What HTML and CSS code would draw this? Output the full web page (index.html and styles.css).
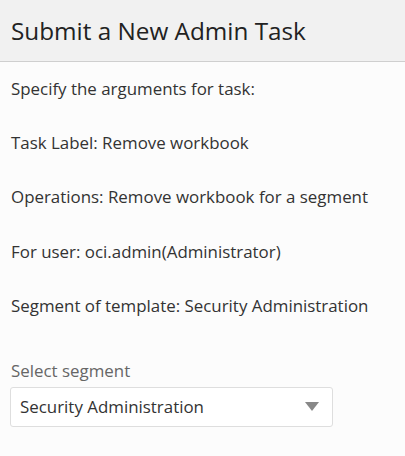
FILE: index.html
```html
<!DOCTYPE html>
<html>
<head>
<meta charset="utf-8">
<link rel="stylesheet" href="styles.css">
</head>
<body>
<div class="dialog">
  <div class="header"><h1 class="title">Submit a New Admin Task</h1></div>
  <div class="content">
    <p class="line">Specify the arguments for task:</p>
    <p class="line">Task Label: Remove workbook</p>
    <p class="line">Operations: Remove workbook for a segment</p>
    <p class="line">For user: oci.admin(Administrator)</p>
    <p class="line">Segment of template: Security Administration</p>
    <div class="field">
      <label class="field-label">Select segment</label>
      <div class="select">
        <span class="select-value">Security Administration</span>
        <span class="caret"></span>
      </div>
    </div>
  </div>
</div>
</body>
</html>
```
FILE: styles.css
```css
html, body {
  margin: 0;
  padding: 0;
  background: #fcfcfc;
}
body {
  font-family: "Open Sans", "Noto Sans", sans-serif;
  color: #333;
  width: 405px;
  height: 456px;
  overflow: hidden;
}
.header {
  background: #f1f1f1;
  border-bottom: 1px solid #cfcfcf;
  height: 61px;
  display: flex;
  align-items: center;
  padding: 0 11px;
}
.title {
  margin: 0;
  font-size: 24.3px;
  font-weight: 400;
  color: #222;
}
.content {
  padding: 16px 10px 0 11px;
}
.line {
  margin: 0;
  font-size: 16.9px;
  line-height: 22px;
  height: 54.2px;
  color: #333;
}
.field {
  margin-top: 11px;
}
.field-label {
  display: block;
  font-size: 16.9px;
  line-height: 22px;
  color: #666;
  margin-bottom: 5px;
}
.select {
  box-sizing: border-box;
  width: 323px;
  height: 40px;
  margin-left: -1px;
  border: 1px solid #dedede;
  border-radius: 3px;
  background: #fff;
  display: flex;
  align-items: center;
  justify-content: space-between;
  padding: 0 13px 0 9px;
}
.select-value {
  font-size: 16.9px;
  color: #333;
}
.caret {
  width: 0;
  height: 0;
  border-left: 7px solid transparent;
  border-right: 7px solid transparent;
  border-top: 9px solid #888;
}
```
